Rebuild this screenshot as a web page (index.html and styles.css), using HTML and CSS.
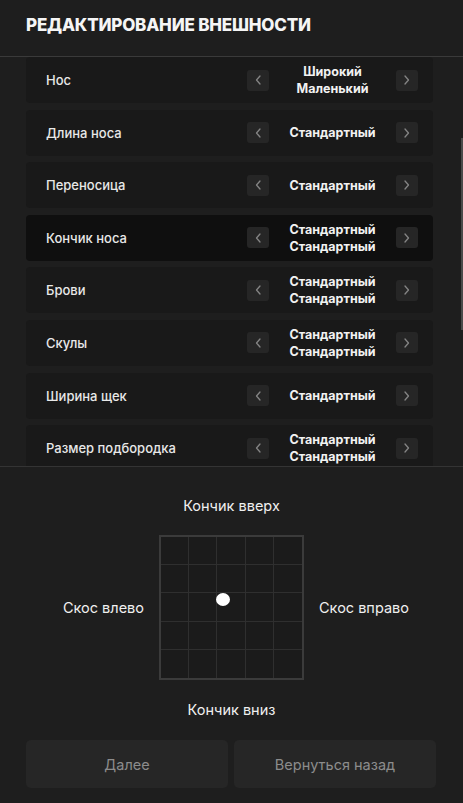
FILE: index.html
```html
<!DOCTYPE html>
<html lang="ru">
<head>
<meta charset="utf-8">
<title>Редактирование внешности</title>
<link rel="stylesheet" href="styles.css">
</head>
<body>
<div class="panel">
  <header class="head"><h1 class="title">Редактирование внешности</h1></header>
  <div class="list">
    <div class="row"><span class="label">Нос</span><div class="ctrl"><button class="arr"><svg viewBox="0 0 6 10"><path d="M5 1 L1.5 5 L5 9"/></svg></button><div class="val">Широкий<br>Маленький</div><button class="arr"><svg viewBox="0 0 6 10"><path d="M1 1 L4.5 5 L1 9"/></svg></button></div></div>
    <div class="row"><span class="label">Длина носа</span><div class="ctrl"><button class="arr"><svg viewBox="0 0 6 10"><path d="M5 1 L1.5 5 L5 9"/></svg></button><div class="val">Стандартный</div><button class="arr"><svg viewBox="0 0 6 10"><path d="M1 1 L4.5 5 L1 9"/></svg></button></div></div>
    <div class="row"><span class="label">Переносица</span><div class="ctrl"><button class="arr"><svg viewBox="0 0 6 10"><path d="M5 1 L1.5 5 L5 9"/></svg></button><div class="val">Стандартный</div><button class="arr"><svg viewBox="0 0 6 10"><path d="M1 1 L4.5 5 L1 9"/></svg></button></div></div>
    <div class="row active"><span class="label">Кончик носа</span><div class="ctrl"><button class="arr"><svg viewBox="0 0 6 10"><path d="M5 1 L1.5 5 L5 9"/></svg></button><div class="val">Стандартный<br>Стандартный</div><button class="arr"><svg viewBox="0 0 6 10"><path d="M1 1 L4.5 5 L1 9"/></svg></button></div></div>
    <div class="row"><span class="label">Брови</span><div class="ctrl"><button class="arr"><svg viewBox="0 0 6 10"><path d="M5 1 L1.5 5 L5 9"/></svg></button><div class="val">Стандартный<br>Стандартный</div><button class="arr"><svg viewBox="0 0 6 10"><path d="M1 1 L4.5 5 L1 9"/></svg></button></div></div>
    <div class="row"><span class="label">Скулы</span><div class="ctrl"><button class="arr"><svg viewBox="0 0 6 10"><path d="M5 1 L1.5 5 L5 9"/></svg></button><div class="val">Стандартный<br>Стандартный</div><button class="arr"><svg viewBox="0 0 6 10"><path d="M1 1 L4.5 5 L1 9"/></svg></button></div></div>
    <div class="row"><span class="label">Ширина щек</span><div class="ctrl"><button class="arr"><svg viewBox="0 0 6 10"><path d="M5 1 L1.5 5 L5 9"/></svg></button><div class="val">Стандартный</div><button class="arr"><svg viewBox="0 0 6 10"><path d="M1 1 L4.5 5 L1 9"/></svg></button></div></div>
    <div class="row"><span class="label">Размер подбородка</span><div class="ctrl"><button class="arr"><svg viewBox="0 0 6 10"><path d="M5 1 L1.5 5 L5 9"/></svg></button><div class="val">Стандартный<br>Стандартный</div><button class="arr"><svg viewBox="0 0 6 10"><path d="M1 1 L4.5 5 L1 9"/></svg></button></div></div>
    <div class="thumb"></div>
  </div>
  <section class="pad">
    <div class="pad-top">Кончик вверх</div>
    <div class="pad-mid">
      <span class="side left">Скос влево</span>
      <div class="grid">
        <div class="cell"></div><div class="cell"></div><div class="cell"></div><div class="cell"></div><div class="cell"></div>
        <div class="cell"></div><div class="cell"></div><div class="cell"></div><div class="cell"></div><div class="cell"></div>
        <div class="cell"></div><div class="cell"></div><div class="cell"></div><div class="cell"></div><div class="cell"></div>
        <div class="cell"></div><div class="cell"></div><div class="cell"></div><div class="cell"></div><div class="cell"></div>
        <div class="cell"></div><div class="cell"></div><div class="cell"></div><div class="cell"></div><div class="cell"></div>
        <div class="dot"></div>
      </div>
      <span class="side right">Скос вправо</span>
    </div>
    <div class="pad-bot">Кончик вниз</div>
  </section>
  <footer class="actions">
    <button class="btn">Далее</button>
    <button class="btn">Вернуться назад</button>
  </footer>
</div>
</body>
</html>
```
FILE: styles.css
```css
* { box-sizing: border-box; }
html, body { margin: 0; padding: 0; }
body {
  background: #1e1e1e;
  font-family: "Inter", "Noto Sans", sans-serif;
  color: #ececec;
  width: 463px;
  height: 803px;
  overflow: hidden;
}
.panel { display: flex; flex-direction: column; height: 803px; }
.head {
  height: 57px;
  border-bottom: 1px solid #3a3a3a;
  padding: 0 26px;
  display: flex;
  align-items: center;
  padding-bottom: 6px;
}
.title {
  margin: 0;
  font-size: 17px;
  font-weight: 800;
  text-transform: uppercase;
  color: #f5f5f5;
  letter-spacing: -0.2px;
}
.list {
  position: relative;
  height: 410px;
  overflow: hidden;
  padding-left: 26px;
  display: flex;
  flex-direction: column;
  gap: 6.6px;
  border-bottom: 1px solid #343434;
}
.row {
  flex: none;
  width: 407px;
  height: 46px;
  background: #191919;
  border-radius: 4px;
  display: flex;
  align-items: center;
  padding-left: 20px;
  padding-right: 15px;
}
.row.active { background: #0f0f0f; }
.label { flex: 1; font-size: 13px; font-weight: 500; color: #e8e8e8; }
.ctrl { display: flex; align-items: center; }
.arr {
  width: 22px;
  height: 21px;
  border: none;
  border-radius: 3px;
  background: #262626;
  padding: 0;
  display: flex;
  align-items: center;
  justify-content: center;
}
.arr svg { width: 6px; height: 10px; display: block; }
.arr path { fill: none; stroke: #858585; stroke-width: 1.3; stroke-linecap: round; stroke-linejoin: round; }
.val {
  width: 127px;
  text-align: center;
  font-size: 12.5px;
  font-weight: 700;
  line-height: 17px;
  color: #f2f2f2;
}
.thumb {
  position: absolute;
  right: 0;
  top: 81px;
  width: 2px;
  height: 192px;
  background: #4a4a4a;
}
.pad {
  flex: 1;
  display: flex;
  flex-direction: column;
  align-items: center;
  padding-top: 30px;
  font-size: 14.5px;
  color: #f0f0f0;
}
.pad-top, .pad-bot { line-height: 17px; }
.pad-top { margin-bottom: 21px; }
.pad-mid { display: flex; align-items: center; gap: 15px; }
.side { width: 97px; }
.side.left { text-align: right; }
.side.right { text-align: left; }
.grid {
  position: relative;
  width: 145px;
  height: 145px;
  border: 2px solid #3b3b3b;
  background: #1b1b1b;
  display: grid;
  grid-template-columns: repeat(5, 1fr);
  grid-template-rows: repeat(5, 1fr);
}
.cell { border-right: 1px solid #2f2f2f; border-bottom: 1px solid #2f2f2f; }
.cell:nth-child(5n) { border-right: none; }
.cell:nth-child(n+21) { border-bottom: none; }
.dot {
  position: absolute;
  left: 55px;
  top: 56px;
  width: 14px;
  height: 13px;
  border-radius: 50%;
  background: #fff;
}
.pad-bot { margin-top: 21px; }
.actions {
  display: flex;
  gap: 6px;
  padding: 0 27px 15px 26px;
}
.btn {
  flex: 1;
  height: 48px;
  border: none;
  border-radius: 5px;
  background: #262626;
  color: #8c8c8c;
  font-family: "Inter", "Noto Sans", sans-serif;
  font-size: 14.5px;
}
```
